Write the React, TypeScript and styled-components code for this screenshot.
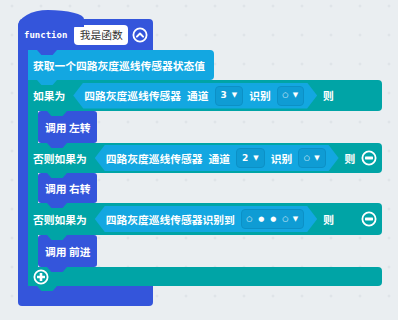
import React from 'react';
import styled, { createGlobalStyle, css } from 'styled-components';

const BLUE = '#3455db';
const CYAN = '#13a7e1';
const TEAL = '#00a4a6';
const CJK = `"Noto Sans CJK SC", "Noto Sans", sans-serif`;

const GlobalStyle = createGlobalStyle`
  *, *::before, *::after { box-sizing: border-box; }
  html, body { margin: 0; padding: 0; }
  body {
    width: 398px;
    height: 320px;
    overflow: hidden;
    background-color: #eaeef1;
    background-image: radial-gradient(circle at center, #d6dce0 0 0.8px, transparent 1.3px);
    background-size: 29px 29px;
    background-position: -2.5px -8.5px;
  }
`;

const tab = (color: string, left: number) => css`
  &::after {
    content: '';
    position: absolute;
    left: ${left}px;
    bottom: -5px;
    width: 20px;
    height: 5px;
    background: ${color};
    clip-path: polygon(0 0, 100% 0, 78% 100%, 22% 100%);
    z-index: 2;
  }
`;

const Canvas = styled.div`
  padding: 19px 0 0 18px;
  font-family: ${CJK};
`;

const Func = styled.div`
  display: flex;
  flex-direction: column;
  width: 135px;
`;

const FuncHeader = styled.div`
  position: relative;
  height: 31px;
  display: flex;
  align-items: center;
  padding-left: 6px;
  background: ${BLUE};
  border-radius: 4px 4px 0 0 / 8px 4px 0 0;
  ${tab(BLUE, 19)}
  &::before {
    content: '';
    position: absolute;
    left: 0;
    top: -9px;
    width: 66px;
    height: 17px;
    background: ${BLUE};
    border-radius: 30px 36px 0 0 / 17px 9px 0 0;
  }
`;

const Keyword = styled.span`
  font-family: "DejaVu Sans Mono", "Liberation Mono", monospace;
  font-weight: 700;
  font-size: 9px;
  color: #fff;
`;

const NameField = styled.span`
  margin-left: 7px;
  width: 54px;
  height: 20px;
  display: flex;
  align-items: center;
  justify-content: center;
  background: #fff;
  border-radius: 4px;
  color: #333;
  font-size: 10.75px;
`;

const IconBtn = styled.span<{ $ml?: string; $mr?: number }>`
  display: flex;
  margin-left: ${(p) => p.$ml ?? '4px'};
  margin-right: ${(p) => p.$mr ?? 0}px;
`;

const FuncBody = styled.div`
  display: flex;
`;

const FuncArm = styled.div`
  width: 10px;
  flex: none;
  background: ${BLUE};
`;

const Stack = styled.div`
  display: flex;
  flex-direction: column;
  align-items: flex-start;
`;

const FuncFooter = styled.div`
  height: 20px;
  background: ${BLUE};
  border-radius: 0 0 4px 4px;
`;

const GetBlock = styled.div`
  position: relative;
  height: 30px;
  display: flex;
  align-items: center;
  padding: 0 9px 0 5px;
  background: ${CYAN};
  border-radius: 0 4px 4px 0;
  color: #fff;
  font-weight: 700;
  font-size: 10.75px;
  white-space: nowrap;
  ${tab(CYAN, 9)}
`;

const IfBlock = styled.div`
  display: flex;
  flex-direction: column;
  width: 354px;
`;

const IfRow = styled.div<{ $h: number }>`
  position: relative;
  height: ${(p) => p.$h}px;
  display: flex;
  align-items: center;
  padding: 0 0 0 5px;
  background: ${TEAL};
  border-radius: 0 4px 4px 0;
  color: #fff;
  font-weight: 700;
  font-size: 10.75px;
  white-space: nowrap;
  ${tab(TEAL, 19)}
`;

const Label = styled.span<{ $ml?: number }>`
  margin-left: ${(p) => p.$ml ?? 0}px;
`;

const Slot = styled.div`
  margin-left: 8px;
  height: 26px;
  display: flex;
  align-items: center;
  gap: 6px;
  padding: 0 13px 0 11px;
  background: ${CYAN};
  clip-path: polygon(0 50%, 10px 0, calc(100% - 10px) 0, 100% 50%, calc(100% - 10px) 100%, 10px 100%);
`;

const Dropdown = styled.div`
  height: 20px;
  display: flex;
  align-items: center;
  gap: 5px;
  padding: 0 5px;
  background: #0f9cd4;
  border: 1px solid #0c90c6;
  border-radius: 4px;
  font-family: "DejaVu Sans", sans-serif;
  font-weight: 700;
  color: #fff;
`;

const Value = styled.span`
  font-size: 9px;
  line-height: 1;
`;

const Pattern = styled.span`
  display: flex;
  align-items: center;
  gap: 7px;
`;

const Glyph = styled.span`
  width: 5px;
  display: inline-flex;
  justify-content: center;
  font-size: 7px;
  line-height: 1;
`;

const Caret = styled.span`
  font-size: 7px;
  line-height: 1;
`;

const Mouth = styled.div`
  display: flex;
`;

const MouthArm = styled.div`
  width: 10px;
  flex: none;
  background: ${TEAL};
`;

const CallBlock = styled.div<{ $h: number }>`
  position: relative;
  height: ${(p) => p.$h}px;
  width: 59px;
  display: flex;
  align-items: center;
  padding-left: 7px;
  background: ${BLUE};
  border-radius: 3px;
  color: #fff;
  font-weight: 700;
  font-size: 10.75px;
  white-space: nowrap;
  ${tab(BLUE, 9)}
`;

const IfFooter = styled.div`
  position: relative;
  height: 19px;
  display: flex;
  align-items: center;
  padding-left: 5px;
  background: ${TEAL};
  border-radius: 0 4px 4px 0;
  ${tab(TEAL, 9)}
`;

type IconKind = 'up' | 'plus' | 'minus';

const CircleIcon = ({ kind }: { kind: IconKind }) => (
  <svg width="16" height="16" viewBox="0 0 16 16">
    <circle cx="8" cy="8" r="6.6" fill="none" stroke="#fff" strokeWidth="1.8" />
    {kind === 'minus' && <rect x="4" y="6.6" width="8" height="2.8" rx="0.6" fill="#fff" />}
    {kind === 'plus' && <path d="M8 4v8M4 8h8" stroke="#fff" strokeWidth="2.6" />}
    {kind === 'up' && (
      <path
        d="M4.9 9.6L8 6.5l3.1 3.1"
        stroke="#fff"
        strokeWidth="2"
        fill="none"
        strokeLinecap="round"
        strokeLinejoin="round"
      />
    )}
  </svg>
);

const NumberSelect = ({ value }: { value: string }) => (
  <Dropdown>
    <Value>{value}</Value>
    <Caret>▼</Caret>
  </Dropdown>
);

const PatternSelect = ({ pattern }: { pattern: string[] }) => (
  <Dropdown>
    <Pattern>
      {pattern.map((g, i) => (
        <Glyph key={i}>{g}</Glyph>
      ))}
    </Pattern>
    <Caret>▼</Caret>
  </Dropdown>
);

const ChannelSlot = ({ channel }: { channel: string }) => (
  <Slot>
    <span>四路灰度巡线传感器</span>
    <span>通道</span>
    <NumberSelect value={channel} />
    <span>识别</span>
    <PatternSelect pattern={['○']} />
  </Slot>
);

export default function App() {
  return (
    <>
      <GlobalStyle />
      <Canvas>
        <Func>
          <FuncHeader>
            <Keyword>function</Keyword>
            <NameField>我是函数</NameField>
            <IconBtn>
              <CircleIcon kind="up" />
            </IconBtn>
          </FuncHeader>
          <FuncBody>
            <FuncArm />
            <Stack>
              <GetBlock>获取一个四路灰度巡线传感器状态值</GetBlock>
              <IfBlock>
                <IfRow $h={31}>
                  <Label>如果为</Label>
                  <ChannelSlot channel="3" />
                  <Label $ml={6}>则</Label>
                </IfRow>
                <Mouth>
                  <MouthArm />
                  <CallBlock $h={32}>调用 左转</CallBlock>
                </Mouth>
                <IfRow $h={30}>
                  <Label>否则如果为</Label>
                  <ChannelSlot channel="2" />
                  <Label $ml={6}>则</Label>
                  <IconBtn $ml="auto" $mr={5}>
                    <CircleIcon kind="minus" />
                  </IconBtn>
                </IfRow>
                <Mouth>
                  <MouthArm />
                  <CallBlock $h={30}>调用 右转</CallBlock>
                </Mouth>
                <IfRow $h={32}>
                  <Label>否则如果为</Label>
                  <Slot>
                    <span>四路灰度巡线传感器识别到</span>
                    <PatternSelect pattern={['○', '●', '●', '○']} />
                  </Slot>
                  <Label $ml={6}>则</Label>
                  <IconBtn $ml="auto" $mr={5}>
                    <CircleIcon kind="minus" />
                  </IconBtn>
                </IfRow>
                <Mouth>
                  <MouthArm />
                  <CallBlock $h={32}>调用 前进</CallBlock>
                </Mouth>
                <IfFooter>
                  <CircleIcon kind="plus" />
                </IfFooter>
              </IfBlock>
            </Stack>
          </FuncBody>
          <FuncFooter />
        </Func>
      </Canvas>
    </>
  );
}
